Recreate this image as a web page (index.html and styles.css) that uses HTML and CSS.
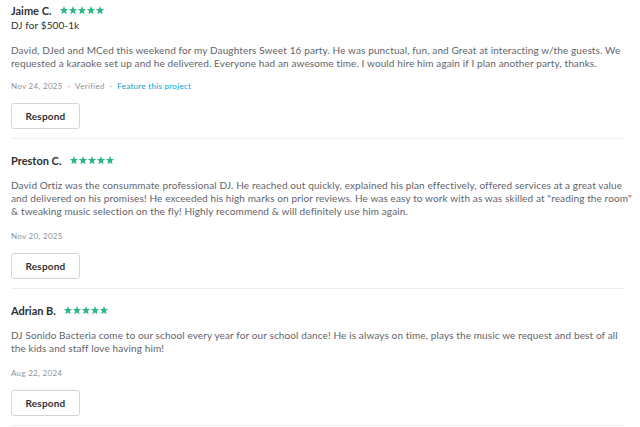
FILE: index.html
```html
<!DOCTYPE html>
<html>
<head>
<meta charset="utf-8">
<link rel="stylesheet" href="styles.css">
</head>
<body>
<div class="reviews">
  <section class="review">
    <div class="head">
      <span class="name">Jaime C.</span>
      <svg class="stars" width="45" height="9" viewBox="0 0 45 9"><g fill="#2db783"><polygon points="4,0 5.1,2.9 8.2,3.1 5.8,5.1 6.6,8.2 4,6.5 1.4,8.2 2.2,5.1 -0.2,3.1 2.9,2.9"/><polygon transform="translate(9,0)" points="4,0 5.1,2.9 8.2,3.1 5.8,5.1 6.6,8.2 4,6.5 1.4,8.2 2.2,5.1 -0.2,3.1 2.9,2.9"/><polygon transform="translate(18,0)" points="4,0 5.1,2.9 8.2,3.1 5.8,5.1 6.6,8.2 4,6.5 1.4,8.2 2.2,5.1 -0.2,3.1 2.9,2.9"/><polygon transform="translate(27,0)" points="4,0 5.1,2.9 8.2,3.1 5.8,5.1 6.6,8.2 4,6.5 1.4,8.2 2.2,5.1 -0.2,3.1 2.9,2.9"/><polygon transform="translate(36,0)" points="4,0 5.1,2.9 8.2,3.1 5.8,5.1 6.6,8.2 4,6.5 1.4,8.2 2.2,5.1 -0.2,3.1 2.9,2.9"/></g></svg>
    </div>
    <div class="service">DJ for $500-1k</div>
    <p class="body">David, DJed and MCed this weekend for my Daughters Sweet 16 party. He was punctual, fun, and Great at interacting w/the guests. We requested a karaoke set up and he delivered. Everyone had an awesome time. I would hire him again if I plan another party, thanks.</p>
    <div class="meta">Nov 24, 2025<span class="dot">·</span>Verified<span class="dot">·</span><a class="link">Feature this project</a></div>
    <button class="respond">Respond</button>
  </section>
  <section class="review">
    <div class="head">
      <span class="name">Preston C.</span>
      <svg class="stars" width="45" height="9" viewBox="0 0 45 9"><g fill="#2db783"><polygon points="4,0 5.1,2.9 8.2,3.1 5.8,5.1 6.6,8.2 4,6.5 1.4,8.2 2.2,5.1 -0.2,3.1 2.9,2.9"/><polygon transform="translate(9,0)" points="4,0 5.1,2.9 8.2,3.1 5.8,5.1 6.6,8.2 4,6.5 1.4,8.2 2.2,5.1 -0.2,3.1 2.9,2.9"/><polygon transform="translate(18,0)" points="4,0 5.1,2.9 8.2,3.1 5.8,5.1 6.6,8.2 4,6.5 1.4,8.2 2.2,5.1 -0.2,3.1 2.9,2.9"/><polygon transform="translate(27,0)" points="4,0 5.1,2.9 8.2,3.1 5.8,5.1 6.6,8.2 4,6.5 1.4,8.2 2.2,5.1 -0.2,3.1 2.9,2.9"/><polygon transform="translate(36,0)" points="4,0 5.1,2.9 8.2,3.1 5.8,5.1 6.6,8.2 4,6.5 1.4,8.2 2.2,5.1 -0.2,3.1 2.9,2.9"/></g></svg>
    </div>
    <p class="body">David Ortiz was the consummate professional DJ. He reached out quickly, explained his plan effectively, offered services at a great value and delivered on his promises! He exceeded his high marks on prior reviews. He was easy to work with as was skilled at "reading the room" &amp; tweaking music selection on the fly! Highly recommend &amp; will definitely use him again.</p>
    <div class="meta">Nov 20, 2025</div>
    <button class="respond">Respond</button>
  </section>
  <section class="review">
    <div class="head">
      <span class="name">Adrian B.</span>
      <svg class="stars" width="45" height="9" viewBox="0 0 45 9"><g fill="#2db783"><polygon points="4,0 5.1,2.9 8.2,3.1 5.8,5.1 6.6,8.2 4,6.5 1.4,8.2 2.2,5.1 -0.2,3.1 2.9,2.9"/><polygon transform="translate(9,0)" points="4,0 5.1,2.9 8.2,3.1 5.8,5.1 6.6,8.2 4,6.5 1.4,8.2 2.2,5.1 -0.2,3.1 2.9,2.9"/><polygon transform="translate(18,0)" points="4,0 5.1,2.9 8.2,3.1 5.8,5.1 6.6,8.2 4,6.5 1.4,8.2 2.2,5.1 -0.2,3.1 2.9,2.9"/><polygon transform="translate(27,0)" points="4,0 5.1,2.9 8.2,3.1 5.8,5.1 6.6,8.2 4,6.5 1.4,8.2 2.2,5.1 -0.2,3.1 2.9,2.9"/><polygon transform="translate(36,0)" points="4,0 5.1,2.9 8.2,3.1 5.8,5.1 6.6,8.2 4,6.5 1.4,8.2 2.2,5.1 -0.2,3.1 2.9,2.9"/></g></svg>
    </div>
    <p class="body">DJ Sonido Bacteria come to our school every year for our school dance! He is always on time, plays the music we request and best of all the kids and staff love having him!</p>
    <div class="meta">Aug 22, 2024</div>
    <button class="respond">Respond</button>
  </section>
</div>
</body>
</html>
```
FILE: styles.css
```css
html, body {
  margin: 0;
  padding: 0;
  background: #ffffff;
}
body {
  font-family: "Lato", "Open Sans", sans-serif;
  color: #2f3033;
}
.reviews {
  width: 613px;
  padding-left: 11px;
}
.review {
  border-bottom: 1px solid #eeeeee;
  padding-top: 3px;
  padding-bottom: 9px;
}
.review + .review {
  padding-top: 14px;
}
.head {
  display: flex;
  align-items: center;
  gap: 8px;
  height: 14px;
}
.name {
  font-size: 11px;
  font-weight: 700;
  color: #2f3033;
}
.stars {
  display: block;
}
.service {
  font-size: 10px;
  color: #2f3033;
  margin-top: 2px;
  line-height: 13px;
  letter-spacing: 0.1px;
}
.body {
  margin: 12px -8px 0 0;
  font-size: 10px;
  line-height: 13px;
  letter-spacing: 0.12px;
  color: #5f6469;
}
.review + .review .body {
  margin-top: 12px;
}
.meta {
  margin-top: 11px;
  font-size: 8px;
  line-height: 10px;
  letter-spacing: 0.3px;
  color: #8e9296;
}
.review + .review .meta {
  margin-top: 13px;
}
.dot {
  margin: 0 5px;
}
.link {
  color: #009fd9;
}
.respond {
  display: block;
  margin-top: 12px;
  width: 69px;
  height: 26px;
  padding: 0;
  background: #ffffff;
  border: 1px solid #d3d4d5;
  border-radius: 3px;
  font-family: "Lato", sans-serif;
  font-size: 10px;
  font-weight: 700;
  letter-spacing: 0.2px;
  color: #2f3033;
}
```
